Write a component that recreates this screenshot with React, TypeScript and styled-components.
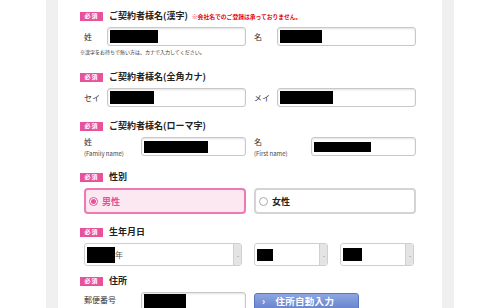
import React from "react";
import styled, { createGlobalStyle } from "styled-components";

const Global = createGlobalStyle`
  html, body { margin: 0; padding: 0; background: #fff; }
  body { font-family: "Noto Sans CJK JP", "Noto Sans", sans-serif; color: #222; }
`;

const Page = styled.div`
  display: flex;
  width: 500px;
  height: 308px;
  overflow: hidden;
`;

const Side = styled.div`
  width: 46px;
  background: #fff;
`;

const Rail = styled.div`
  width: 12px;
  background: #f0f0f0;
`;

const Content = styled.div`
  width: 384px;
  padding: 10px 0 0 22px;
  box-sizing: border-box;
  display: flex;
  flex-direction: column;
`;

const Section = styled.section<{ $mt: number }>`
  margin-top: ${(p) => p.$mt}px;
  display: flex;
  flex-direction: column;
  gap: 5px;
`;

const Header = styled.div`
  display: flex;
  align-items: center;
  height: 12px;
  gap: 6px;
`;

const Badge = styled.span`
  display: inline-flex;
  align-items: center;
  justify-content: center;
  width: 23px;
  height: 9px;
  background: #e8529c;
  color: #fff;
  font-size: 6px;
  font-weight: 700;
  letter-spacing: 1px;
  line-height: 1;
`;

const Title = styled.span`
  font-size: 9px;
  font-weight: 700;
  color: #222;
  line-height: 12px;
`;

const Warn = styled.span`
  font-size: 5.8px;
  font-weight: 700;
  color: #e60012;
  margin-left: -2px;
`;

const Grid = styled.div`
  display: grid;
  grid-template-columns: 162px 162px;
  column-gap: 8px;
  margin-left: 4px;
`;

const Field = styled.div<{ $label: number }>`
  display: grid;
  grid-template-columns: ${(p) => p.$label}px 1fr;
  align-items: center;
`;

const Label = styled.div`
  font-size: 8px;
  color: #333;
  line-height: 10px;
`;

const Sub = styled.div`
  font-size: 6px;
  color: #444;
  margin-top: 3px;
  line-height: 7px;
`;

const TwoLine = styled.div`
  display: flex;
  flex-direction: column;
  height: 19px;
  margin-top: -1px;
`;

const InputBox = styled.div`
  height: 19px;
  box-sizing: border-box;
  border: 1px solid #c8c8c8;
  border-radius: 3px;
  box-shadow: inset 0 1px 2px rgba(0, 0, 0, 0.12);
  background: #fff;
  display: flex;
  align-items: center;
  padding-left: 2px;
`;

const Redact = styled.span<{ $w: number; $h?: number }>`
  display: inline-block;
  width: ${(p) => p.$w}px;
  height: ${(p) => p.$h ?? 13}px;
  background: #000;
`;

const Note = styled.div`
  font-size: 5px;
  color: #333;
  margin-top: 2px;
  line-height: 8px;
`;

const RadioBox = styled.div<{ $on?: boolean }>`
  height: 26px;
  box-sizing: border-box;
  border: ${(p) => (p.$on ? "2px solid #ec7ab3" : "2px solid #d4d4d4")};
  background: ${(p) => (p.$on ? "#fbe8f1" : "#fff")};
  border-radius: 4px;
  display: flex;
  align-items: center;
  padding-left: 3px;
  gap: 4px;
  font-size: 9px;
  font-weight: 700;
  color: ${(p) => (p.$on ? "#e4509a" : "#222")};
`;

const Dot = styled.span<{ $on?: boolean }>`
  width: 9px;
  height: 9px;
  border-radius: 50%;
  box-sizing: border-box;
  border: 1px solid ${(p) => (p.$on ? "#e4509a" : "#aaa")};
  background: #fff;
  display: inline-flex;
  align-items: center;
  justify-content: center;
  &::after {
    content: "";
    display: ${(p) => (p.$on ? "block" : "none")};
    width: 5px;
    height: 5px;
    border-radius: 50%;
    background: #e4509a;
  }
`;

const DateRow = styled.div`
  display: flex;
  margin-left: 4px;
`;

const Select = styled.div<{ $w: number; $ml: number }>`
  width: ${(p) => p.$w}px;
  margin-left: ${(p) => p.$ml}px;
  height: 23px;
  box-sizing: border-box;
  border: 1px solid #cfcfcf;
  border-radius: 3px;
  background: #fff;
  display: flex;
  align-items: center;
  padding-left: 2px;
  font-size: 8px;
  color: #555;
`;

const SelText = styled.span`
  flex: 1;
  display: flex;
  align-items: center;
`;

const Arrow = styled.span`
  width: 7px;
  height: 100%;
  background: #e4e4e4;
  border-left: 1px solid #d0d0d0;
  display: flex;
  align-items: center;
  justify-content: center;
  font-size: 5px;
  color: #888;
`;

const AddrRow = styled.div`
  display: grid;
  grid-template-columns: 170px 105px;
  align-items: start;
  margin-left: 4px;
`;

const AddrField = styled.div`
  display: grid;
  grid-template-columns: 57px 105px;
  align-items: start;
`;

const AddrLabel = styled(Label)`
  padding-top: 3px;
`;

const Button = styled.div`
  height: 20px;
  margin-top: 1px;
  border-radius: 3px;
  background: linear-gradient(#8ea6e2, #5f7cc8);
  border: 1px solid #5a75bd;
  color: #fff;
  font-size: 9.5px;
  font-weight: 700;
  display: flex;
  align-items: flex-start;
  padding: 1px 0 0 7px;
  gap: 10px;
  box-sizing: border-box;
  letter-spacing: 0.3px;
  line-height: 12px;
`;

export default function App() {
  return (
    <>
      <Global />
      <Page>
        <Side />
        <Rail />
        <Content>
          <Section $mt={0}>
            <Header>
              <Badge>必須</Badge>
              <Title>ご契約者様名(漢字)</Title>
              <Warn>※会社名でのご登録は承っておりません。</Warn>
            </Header>
            <div>
              <Grid>
                <Field $label={23}>
                  <Label>姓</Label>
                  <InputBox>
                    <Redact $w={48} />
                  </InputBox>
                </Field>
                <Field $label={23}>
                  <Label>名</Label>
                  <InputBox>
                    <Redact $w={42} />
                  </InputBox>
                </Field>
              </Grid>
              <Note>※漢字をお持ちで無い方は、カナで入力してください。</Note>
            </div>
          </Section>

          <Section $mt={15}>
            <Header>
              <Badge>必須</Badge>
              <Title>ご契約者様名(全角カナ)</Title>
            </Header>
            <Grid>
              <Field $label={23}>
                <Label>セイ</Label>
                <InputBox>
                  <Redact $w={44} />
                </InputBox>
              </Field>
              <Field $label={23}>
                <Label>メイ</Label>
                <InputBox>
                  <Redact $w={53} />
                </InputBox>
              </Field>
            </Grid>
          </Section>

          <Section $mt={13}>
            <Header>
              <Badge>必須</Badge>
              <Title>ご契約者様名(ローマ字)</Title>
            </Header>
            <Grid>
              <Field $label={57}>
                <TwoLine>
                  <Label>姓</Label>
                  <Sub>(Family name)</Sub>
                </TwoLine>
                <InputBox>
                  <Redact $w={64} $h={12} />
                </InputBox>
              </Field>
              <Field $label={57}>
                <TwoLine>
                  <Label>名</Label>
                  <Sub>(First name)</Sub>
                </TwoLine>
                <InputBox>
                  <Redact $w={57} $h={10} />
                </InputBox>
              </Field>
            </Grid>
          </Section>

          <Section $mt={15}>
            <Header>
              <Badge>必須</Badge>
              <Title>性別</Title>
            </Header>
            <Grid>
              <RadioBox $on>
                <Dot $on />
                男性
              </RadioBox>
              <RadioBox>
                <Dot />
                女性
              </RadioBox>
            </Grid>
          </Section>

          <Section $mt={12}>
            <Header>
              <Badge>必須</Badge>
              <Title>生年月日</Title>
            </Header>
            <DateRow>
              <Select $w={158} $ml={0}>
                <SelText>
                  <Redact $w={28} $h={16} />年
                </SelText>
                <Arrow>⌄</Arrow>
              </Select>
              <Select $w={74} $ml={12}>
                <SelText>
                  <Redact $w={16} $h={12} />
                </SelText>
                <Arrow>⌄</Arrow>
              </Select>
              <Select $w={74} $ml={12}>
                <SelText>
                  <Redact $w={19} $h={13} />
                </SelText>
                <Arrow>⌄</Arrow>
              </Select>
            </DateRow>
          </Section>

          <Section $mt={9}>
            <Header>
              <Badge>必須</Badge>
              <Title>住所</Title>
            </Header>
            <AddrRow>
              <AddrField>
                <AddrLabel>郵便番号</AddrLabel>
                <InputBox>
                  <Redact $w={42} $h={15} />
                </InputBox>
              </AddrField>
              <Button>
                <span>›</span>
                <span>住所自動入力</span>
              </Button>
            </AddrRow>
          </Section>
        </Content>
        <Rail />
        <Side />
      </Page>
    </>
  );
}
